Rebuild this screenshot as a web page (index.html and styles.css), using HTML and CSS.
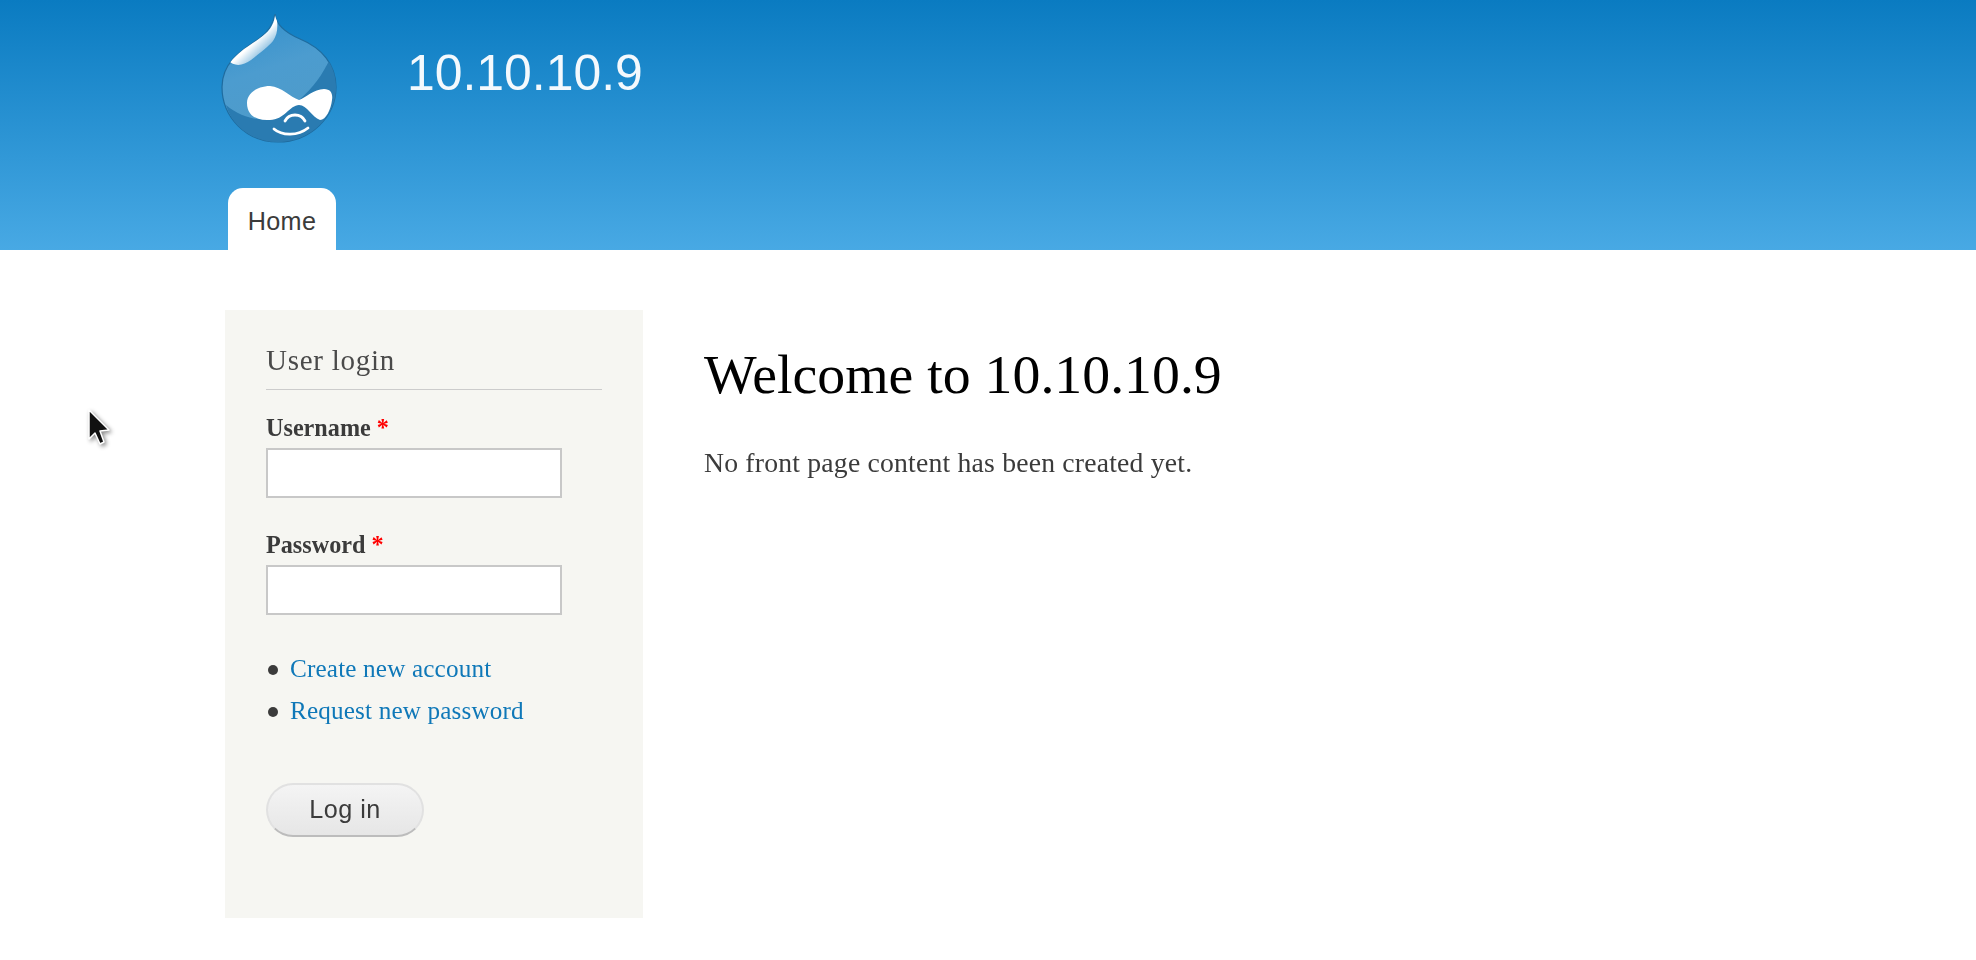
FILE: index.html
```html
<!DOCTYPE html>
<html lang="en">
<head>
<meta charset="utf-8">
<title>Welcome to 10.10.10.9</title>
<link rel="stylesheet" href="styles.css">
</head>
<body>
<header class="site-header">
  <div class="branding">
    <svg class="logo" viewBox="0 0 130 145" aria-hidden="true">
      <defs>
        <linearGradient id="dropFill" x1="0" y1="0" x2="0.3" y2="1">
          <stop offset="0" stop-color="#2f8ecb"/>
          <stop offset="0.5" stop-color="#4c9ccf"/>
          <stop offset="1" stop-color="#4f9bc9"/>
        </linearGradient>
        <linearGradient id="glare" x1="0.25" y1="0.25" x2="0.75" y2="0.8">
          <stop offset="0" stop-color="#fff"/>
          <stop offset="0.55" stop-color="#fff"/>
          <stop offset="1" stop-color="#fff" stop-opacity="0.3"/>
        </linearGradient>
        <clipPath id="dropClip">
          <path d="M65 9C66 20 76 28 90 34C112 43 126 60 126 82C126 112 100 137 68 137C36 137 12 112 12 82C12 54 38 42 50 33C58 27 63 20 65 9Z"/>
        </clipPath>
      </defs>
      <path d="M65 9C66 20 76 28 90 34C112 43 126 60 126 82C126 112 100 137 68 137C36 137 12 112 12 82C12 54 38 42 50 33C58 27 63 20 65 9Z" fill="url(#dropFill)" stroke="#1f6c9f" stroke-width="1.2"/>
      <g clip-path="url(#dropClip)">
        <path d="M120 54C112 70 104 82 88 96L62 114C48 116 30 112 16 100C22 122 44 138 68 138C100 138 127 112 127 82C127 72 124 62 120 54Z" fill="#2a7bb1"/>
        <path d="M65 10C64 21 58 28 49 33C38 40 26 46 18 55C24 62 33 61 41 55C50 48 58 42 63 36C67 30 68 24 67 14Z" fill="url(#glare)"/>
      </g>
      <path d="M37 98C37 87 49 81 60 81C72 82 80 92 89 95C95 93 104 84 114 84C121 84 123 89 122 95C121 104 116 115 110 115C102 112 97 100 89 100C80 100 74 115 60 115C46 116 37 110 37 98Z" fill="#fff"/>
      <path d="M75 116C79 108 91 108 95 116" fill="none" stroke="#fff" stroke-width="2.8" stroke-linecap="round"/>
      <path d="M64 124C72 131 88 131 98 123" fill="none" stroke="#fff" stroke-width="2.8" stroke-linecap="round"/>
    </svg>
    <div class="site-name">10.10.10.9</div>
  </div>
  <nav class="main-menu"><a class="tab" href="#">Home</a></nav>
</header>
<main class="page">
  <aside class="sidebar">
    <h2 class="block-title">User login</h2>
    <form class="login-form">
      <div class="field">
        <label class="field-label" for="user">Username <span class="req">*</span></label>
        <input class="text-input" id="user" type="text">
      </div>
      <div class="field">
        <label class="field-label" for="pass">Password <span class="req">*</span></label>
        <input class="text-input" id="pass" type="password">
      </div>
      <ul class="links">
        <li><a href="#">Create new account</a></li>
        <li><a href="#">Request new password</a></li>
      </ul>
      <button class="submit" type="button">Log in</button>
    </form>
  </aside>
  <section class="content">
    <h1 class="page-title">Welcome to 10.10.10.9</h1>
    <p class="front-text">No front page content has been created yet.</p>
  </section>
</main>
<svg class="cursor" viewBox="0 0 26 42" aria-hidden="true">
  <path d="M3 2L3 31L9 25L14 36L18 34L14 23L23 22Z" fill="#111" stroke="#fff" stroke-width="1.5" stroke-linejoin="round"/>
</svg>
</body>
</html>
```
FILE: styles.css
```css
* { box-sizing: border-box; }
html, body { margin: 0; height: 100%; }
body {
  position: relative;
  background: #fff;
  color: #3b3b3b;
  font-family: "Liberation Serif", serif;
  overflow: hidden;
}
.site-header {
  height: 250px;
  padding-left: 222px;
  background: linear-gradient(#0a7bc1, #48a9e4);
  display: flex;
  flex-direction: column;
  overflow: hidden;
}
.branding { display: flex; height: 188px; align-items: flex-start; }
.logo { width: 130px; height: 145px; margin: 5px 0 0 -12px; flex: none; filter: blur(0.5px); }
.site-name {
  margin: 39px 0 0 67px;
  font: 49.9px/68px "Liberation Sans", sans-serif;
  color: #f4f9fd;
  filter: blur(0.5px);
}
.main-menu { display: flex; padding-left: 6px; }
.tab {
  width: 108px;
  height: 62px;
  background: #fff;
  border-radius: 15px 15px 0 0;
  color: #3b3b3b;
  text-decoration: none;
  font: 25.2px/67px "Liberation Sans", sans-serif;
  letter-spacing: 0.3px;
  text-align: center;
}
.page { display: flex; padding: 60px 0 0 225px; align-items: flex-start; }
.sidebar {
  width: 418px;
  height: 608px;
  background: #f6f6f2;
  padding: 30px 41px 0;
  flex: none;
  filter: blur(0.4px);
}
.block-title {
  margin: 0;
  height: 50px;
  border-bottom: 1px solid #ccc;
  font: 400 29px/40px "Liberation Serif", serif;
  letter-spacing: 0.75px;
  color: #4a4a4a;
}
.login-form { display: block; }
.field { margin-top: 21px; }
.field + .field { margin-top: 30px; }
.field-label { display: block; font: 700 24.2px/34px "Liberation Serif", serif; height: 37px; }
.req { color: #f00; }
.text-input {
  display: block;
  width: 296px;
  height: 50px;
  border: 2px solid #c8c8c8;
  background: #fff;
}
.links { list-style: none; margin: 33px 0 0; padding: 0; }
.links li {
  position: relative;
  padding-left: 24px;
  height: 42px;
  font: 25.2px/42px "Liberation Serif", serif;
  letter-spacing: 0.15px;
}
.links li::before {
  content: "";
  position: absolute;
  left: 2px;
  top: 17px;
  width: 10px;
  height: 10px;
  border-radius: 50%;
  background: #3b3b3b;
}
.links a { color: #0f78b8; text-decoration: none; }
.submit {
  display: block;
  margin-top: 51px;
  width: 158px;
  height: 54px;
  border: 2px solid #e1e1e1;
  border-bottom-color: #bcbcbc;
  border-radius: 27px;
  background: linear-gradient(#f4f4f4, #e6e6e6);
  color: #3b3b3b;
  font: 25.2px/1 "Liberation Sans", sans-serif;
  letter-spacing: 0.5px;
  padding: 0;
}
.content { padding: 0 0 0 61px; filter: blur(0.4px); }
.page-title {
  margin: 28px 0 0;
  font: 400 55.8px/72px "Liberation Serif", serif;
  color: #000;
}
.front-text {
  margin: 33px 0 0;
  font: 27.7px/40px "Liberation Serif", serif;
  letter-spacing: 0.2px;
}
.cursor {
  position: absolute;
  left: 86px;
  top: 408px;
  width: 26px;
  height: 42px;
  filter: blur(0.6px) drop-shadow(2px 2px 2px rgba(0,0,0,0.45));
}
```
